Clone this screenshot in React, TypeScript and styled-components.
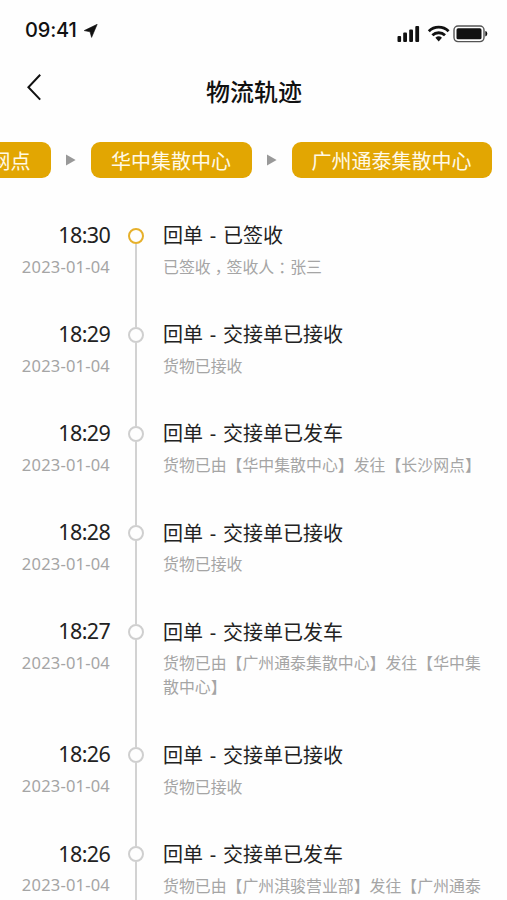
import React from "react";
import styled, { createGlobalStyle } from "styled-components";

const GlobalStyle = createGlobalStyle`
  * { box-sizing: border-box; }
  body {
    margin: 0;
    background: #fefefe;
    overflow: hidden;
    font-family: "Noto Sans", "Noto Sans CJK SC", sans-serif;
    text-spacing-trim: space-all;
  }
`;

const Screen = styled.main`
  width: 507px;
  height: 900px;
  overflow: hidden;
  display: flex;
  flex-direction: column;
  background: #fefefe;
`;

const StatusBar = styled.header`
  height: 60px;
  flex: none;
  display: flex;
  justify-content: space-between;
  padding: 0 18px 0 25px;
`;

const Clock = styled.div`
  display: flex;
  height: 60px;
  gap: 7px;
  font: 500 20px/60px Inter, sans-serif;
  letter-spacing: -0.15px;
  color: #111;
  svg { margin-top: 24px; }
`;

const StatusIcons = styled.div`
  display: flex;
  padding-top: 25px;
`;

const NavBar = styled.nav`
  height: 62px;
  flex: none;
  display: grid;
  grid-template-columns: 60px 1fr 60px;
  align-items: center;
`;

const BackButton = styled.button`
  border: 0;
  background: none;
  padding: 0 0 0 26px;
  height: 62px;
  display: flex;
  align-items: flex-start;
  svg { margin-top: 13px; }
`;

const PageTitle = styled.h1`
  margin: 0;
  padding-left: 1px;
  text-align: center;
  font: 500 24px/60px "Noto Sans CJK SC", sans-serif;
  color: #111;
`;

const Route = styled.div`
  flex: none;
  height: 76px;
  padding: 20px 15.5px 0 0;
  display: flex;
  justify-content: flex-end;
  align-items: flex-start;
`;

const Stop = styled.span<{ $width: number }>`
  flex: none;
  width: ${(p) => p.$width}px;
  height: 36px;
  border-radius: 9px;
  background: #e2a602;
  color: #fff9e6;
  text-align: center;
  white-space: nowrap;
  font: 400 20px/37px "Noto Sans CJK SC", sans-serif;
`;

const Separator = styled.svg`
  flex: none;
  width: 10px;
  height: 12px;
  margin: 12px 15px 0;
`;

const Timeline = styled.ol`
  list-style: none;
  margin: 0;
  padding: 22px 0 0;
`;

const Entry = styled.li`
  display: grid;
  grid-template-columns: 111px 50px 322px;
`;

const Stamp = styled.div`
  text-align: right;
`;

const Time = styled.div`
  font-size: 21.5px;
  line-height: 30px;
  letter-spacing: -0.6px;
  padding-right: 0.8px;
  color: #222;
`;

const DateText = styled.div`
  font-size: 16.5px;
  line-height: 24px;
  margin-top: 4.6px;
  padding-right: 1px;
  letter-spacing: 0.2px;
  color: #a5a5a5;
`;

const Rail = styled.div`
  display: flex;
  flex-direction: column;
  align-items: center;
`;

const Segment = styled.span<{ $lead?: boolean; $hidden?: boolean }>`
  width: 2px;
  flex: ${(p) => (p.$lead ? "0 0 7.5px" : "1")};
  background: ${(p) => (p.$hidden ? "transparent" : "#d2d2d2")};
`;

const Dot = styled.span<{ $active: boolean }>`
  flex: none;
  width: 16px;
  height: 16px;
  border-radius: 50%;
  border: 2px solid ${(p) => (p.$active ? "#e6b02b" : "#cfcfcf")};
`;

const Detail = styled.div`
  padding: 1.3px 0 40px 2px;
`;

const EventTitle = styled.div`
  font-size: 20px;
  line-height: 30px;
  word-spacing: 1.6px;
  color: #222;
`;

const EventText = styled.div`
  font-family: "Noto Sans CJK SC", sans-serif;
  font-size: 15.9px;
  line-height: 24px;
  margin-top: 3.8px;
  color: #a5a5a5;
  white-space: pre-line;
`;

const Mark = styled.span`
  margin: 0 -4px 0 4px;
`;

const events = [
  { time: "18:30", title: "回单 - 已签收", text: "已签收，签收人：张三" },
  { time: "18:29", title: "回单 - 交接单已接收", text: "货物已接收" },
  { time: "18:29", title: "回单 - 交接单已发车", text: "货物已由【华中集散中心】发往【长沙网点】" },
  { time: "18:28", title: "回单 - 交接单已接收", text: "货物已接收" },
  { time: "18:27", title: "回单 - 交接单已发车", text: "货物已由【广州通泰集散中心】发往【华中集\n散中心】" },
  { time: "18:26", title: "回单 - 交接单已接收", text: "货物已接收" },
  { time: "18:26", title: "回单 - 交接单已发车", text: "货物已由【广州淇骏营业部】发往【广州通泰" },
];

const withCentredMarks = (text: string) =>
  text.split(/([，：])/).map((part, i) => (i % 2 ? <Mark key={i}>{part}</Mark> : part));

const Arrow = () => (
  <Separator viewBox="0 0 10 12">
    <path d="M0 0.5 L9.6 6 L0 11.5Z" fill="#999" />
  </Separator>
);

export default function App() {
  return (
    <Screen>
      <GlobalStyle />
      <StatusBar>
        <Clock>
          09:41
          <svg width="14" height="14" viewBox="0 0 14 14">
            <path d="M13.2 0.3 L0.2 6.6 L6 7.8 L7.6 13.4Z" fill="#111" stroke="#111" strokeWidth="0.6" strokeLinejoin="round" />
          </svg>
        </Clock>
        <StatusIcons>
          <svg width="92" height="18" viewBox="0 0 92 18">
            <g fill="#111">
              <rect x="0.5" y="11" width="3.6" height="6" rx="1" />
              <rect x="6.2" y="7.5" width="3.8" height="9.5" rx="1" />
              <rect x="12.2" y="4.5" width="3.8" height="12.5" rx="1" />
              <rect x="18.3" y="1" width="3.8" height="16" rx="1" />
              <path d="M38.4 12.8 a5 5 0 0 1 6.6 0 l-3.3 3.6z" />
              <rect x="59.5" y="3.3" width="25" height="11" rx="1.6" />
              <path d="M88.3 6 q2 0.3 2 2.7 t-2 2.7z" />
            </g>
            <g fill="none" stroke="#111" strokeWidth="2.8">
              <path d="M31.8 6.2 a14.3 14.3 0 0 1 19.8 0" />
              <path d="M35.4 10.3 a9 9 0 0 1 12.6 0" />
            </g>
            <rect x="57" y="1" width="30" height="15.6" rx="4" fill="none" stroke="#555" strokeWidth="1.4" />
          </svg>
        </StatusIcons>
      </StatusBar>
      <NavBar>
        <BackButton aria-label="返回">
          <svg width="16" height="28" viewBox="0 0 16 28">
            <path d="M14.2 1.8 L2.4 14.2 L14.2 26.6" fill="none" stroke="#111" strokeWidth="2" />
          </svg>
        </BackButton>
        <PageTitle>物流轨迹</PageTitle>
      </NavBar>
      <Route>
        <Stop $width={120}>长沙网点</Stop>
        <Arrow />
        <Stop $width={161}>华中集散中心</Stop>
        <Arrow />
        <Stop $width={200}>广州通泰集散中心</Stop>
      </Route>
      <Timeline>
        {events.map((e, i) => (
          <Entry key={i}>
            <Stamp>
              <Time>{e.time}</Time>
              <DateText>2023-01-04</DateText>
            </Stamp>
            <Rail>
              <Segment $lead $hidden={i === 0} />
              <Dot $active={i === 0} />
              <Segment />
            </Rail>
            <Detail>
              <EventTitle>{e.title}</EventTitle>
              <EventText>{withCentredMarks(e.text)}</EventText>
            </Detail>
          </Entry>
        ))}
      </Timeline>
    </Screen>
  );
}
